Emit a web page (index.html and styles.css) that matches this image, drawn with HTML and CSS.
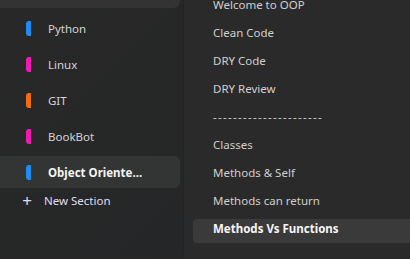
FILE: index.html
```html
<!DOCTYPE html>
<html>
<head>
    <title>Course sections</title>
    <link rel="stylesheet" href="styles.css">
</head>
<body>
    <div class="sidebar">
        <div class="sidebar__card"></div>
        <ul class="sections">
            <li class="section"><span class="section__tag tag--blue"></span>Python</li>
            <li class="section"><span class="section__tag tag--pink"></span>Linux</li>
            <li class="section"><span class="section__tag tag--orange"></span>GIT</li>
            <li class="section"><span class="section__tag tag--pink"></span>BookBot</li>
            <li class="section section--active"><span class="section__tag tag--blue"></span>Object Oriente...</li>
        </ul>
        <a href="#" class="new-section"><span class="new-section__plus">+</span>New Section</a>
    </div><!-- end sidebar -->
    <div class="lessons">
        <ul class="lessons__list">
            <li class="lesson">Welcome to OOP</li>
            <li class="lesson">Clean Code</li>
            <li class="lesson">DRY Code</li>
            <li class="lesson">DRY Review</li>
            <li class="lesson lesson--divider">----------------------</li>
            <li class="lesson">Classes</li>
            <li class="lesson">Methods &amp; Self</li>
            <li class="lesson">Methods can return</li>
            <li class="lesson lesson--active">Methods Vs Functions</li>
        </ul>
    </div><!-- end lessons -->
</body>
</html>
```

FILE: styles.css
```css
html, body {
    margin: 0;
    height: 100%;
    font-family: 'Noto Sans', sans-serif;
    font-size: 11.5px;
    color: #d4d4d4;
    background: #2a2a2a;
    overflow: hidden;
}

body {
    display: flex;
}

ul {
    list-style: none;
    margin: 0;
    padding: 0;
}

.sidebar {
    width: 183px;
    flex-shrink: 0;
    display: flex;
    flex-direction: column;
    background: linear-gradient(135deg, #282828, #252627);
    border-right: 1px solid #232323;
}

.sidebar__card {
    height: 8px;
    width: 180px;
    background: #333333;
    border-radius: 0 0 7px 0;
}

.sections {
    display: flex;
    flex-direction: column;
    gap: 4px;
    margin-top: 4px;
    width: 180px;
}

.section {
    display: flex;
    align-items: center;
    height: 32px;
    padding-left: 26px;
    border-radius: 0 6px 6px 0;
}

.section--active {
    background: #333434;
    font-weight: 700;
    color: #f4f4f4;
}

.section__tag {
    width: 5px;
    height: 15px;
    margin-right: 17px;
    border-radius: 3px 0 0 3px;
}

.tag--blue { background: #1f8bf5; }
.tag--pink { background: #f01ab4; }
.tag--orange { background: #f26c12; }

.new-section {
    display: flex;
    align-items: center;
    height: 20px;
    margin-top: 2px;
    padding-left: 21px;
    color: #e2dcf2;
    text-decoration: none;
}

.new-section__plus {
    width: 12px;
    margin-right: 11px;
    font-size: 17px;
    line-height: 1;
    text-align: center;
}

.lessons {
    flex: 1;
    padding-left: 9px;
}

.lessons__list {
    display: flex;
    flex-direction: column;
    gap: 4px;
    margin-top: -5px;
}

.lesson {
    display: flex;
    align-items: center;
    height: 18px;
    padding: 0 0 6px 20px;
    color: #cfcfcf;
    border-radius: 4px 0 0 4px;
}

.lesson--divider {
    letter-spacing: 1.3px;
}

.lesson--active {
    background: #3a3a3a;
    font-weight: 700;
    color: #f6f6f6;
}
```
